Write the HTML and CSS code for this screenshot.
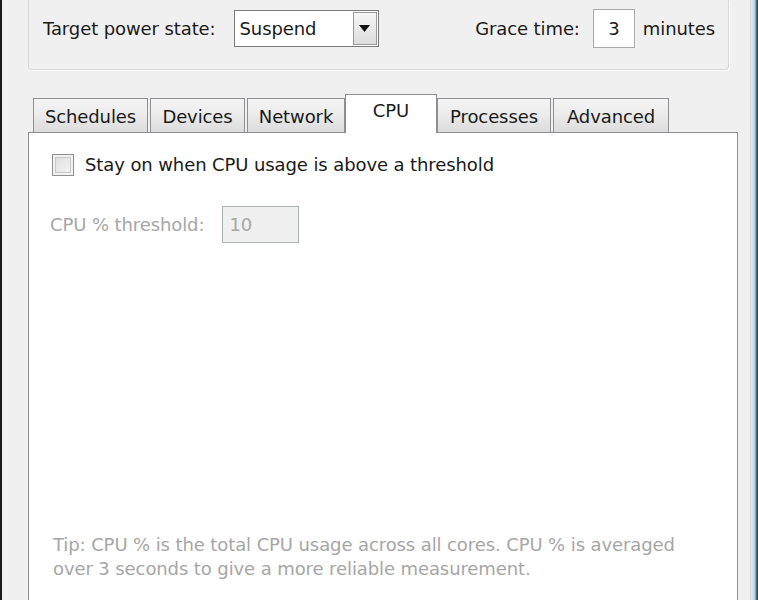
FILE: index.html
```html
<!DOCTYPE html>
<html>
<head>
<meta charset="utf-8">
<link rel="stylesheet" href="styles.css">
</head>
<body>
<div class="window">
  <div class="frame-left"></div>
  <div class="client">
    <div class="group">
      <div class="group-row">
        <span class="label">Target power state:</span>
        <div class="select">
          <span class="select-text">Suspend</span>
          <span class="select-btn"><svg width="11" height="7" viewBox="0 0 11 7"><path d="M0 0 H11 L5.5 7 Z" fill="#111"/></svg></span>
        </div>
        <span class="spacer"></span>
        <span class="label">Grace time:</span>
        <div class="num-input">3</div>
        <span class="label">minutes</span>
      </div>
    </div>
    <div class="tabs-area">
      <div class="tab-strip">
        <div class="tab w-sched">Schedules</div>
        <div class="tab w-dev">Devices</div>
        <div class="tab w-net">Network</div>
        <div class="tab active w-cpu">CPU</div>
        <div class="tab w-proc">Processes</div>
        <div class="tab w-adv">Advanced</div>
      </div>
      <div class="panel">
        <label class="check-row">
          <span class="checkbox"></span>
          <span class="check-label">Stay on when CPU usage is above a threshold</span>
        </label>
        <div class="threshold-row">
          <span class="disabled-label">CPU % threshold:</span>
          <div class="disabled-input">10</div>
        </div>
        <div class="fill"></div>
        <p class="tip">Tip: CPU % is the total CPU usage across all cores. CPU % is averaged<br>over 3 seconds to give a more reliable measurement.</p>
      </div>
    </div>
  </div>
  <div class="frame-right"></div>
</div>
</body>
</html>
```
FILE: styles.css
```css
* { box-sizing: border-box; }
html, body {
  margin: 0;
  padding: 0;
  width: 758px;
  height: 600px;
  overflow: hidden;
  background: #f0f0f0;
}
body {
  font-family: "DejaVu Sans", Verdana, sans-serif;
  font-size: 18px;
  letter-spacing: -0.1px;
  color: #1a1a1a;
}
.window {
  display: flex;
  height: 600px;
}
.frame-left {
  width: 2px;
  background: #1b1b1b;
  flex: none;
}
.client {
  flex: 1;
  display: flex;
  flex-direction: column;
  padding-left: 26px;
  padding-right: 12px;
  border-right: 1px solid #d8d8d8;
}
.frame-right {
  width: 7px;
  flex: none;
  background: linear-gradient(to right, #e6eef5 0, #cfe0ee 2px, #b7d0e6 4px, #5c7d92 5px, #1d3a48 7px);
}
.group {
  width: 701px;
  height: 70px;
  border: 1px solid #d5d9dc;
  border-top: none;
  border-radius: 0 0 4px 4px;
  box-shadow: 1px 1px 0 #fbfbfb;
  padding: 10px 13px 0 14px;
}
.group-row {
  display: flex;
  align-items: center;
  height: 37px;
}
.label { white-space: nowrap; }
.select {
  margin-left: 18px;
  width: 145px;
  height: 37px;
  background: #fff;
  border: 1px solid #7a7a7a;
  display: flex;
  align-items: center;
  justify-content: space-between;
  padding: 1px 1px 1px 5px;
}
.select-btn {
  width: 24px;
  height: 100%;
  border: 1px solid #9a9a9a;
  background: linear-gradient(#f6f6f6, #dcdcdc);
  display: flex;
  align-items: center;
  justify-content: center;
}
.spacer { flex: 1; }
.num-input {
  margin: 0 8px 0 13px;
  width: 42px;
  height: 39px;
  background: #fff;
  border: 1px solid #a9a9a9;
  display: flex;
  align-items: center;
  justify-content: center;
}
.tabs-area {
  margin-top: 24px;
  display: flex;
  flex-direction: column;
  flex: 1;
}
.tab-strip {
  display: flex;
  align-items: flex-end;
  height: 38px;
  padding-left: 5px;
  position: relative;
  z-index: 1;
}
.tab {
  height: 34px;
  margin-right: 2px;
  border: 1px solid #8d8f93;
  border-bottom: none;
  background: linear-gradient(#f4f4f4 0, #ececec 45%, #dcdcdc 100%);
  display: flex;
  align-items: center;
  justify-content: center;
  padding-top: 1px;
  white-space: nowrap;
}
.tab.active {
  height: 39px;
  margin-bottom: -1px;
  background: #fff;
  margin-right: 0;
  margin-left: -2px;
  align-items: flex-start;
  padding-top: 5px;
}
.w-sched { width: 115px; }
.w-dev { width: 95px; }
.w-net { width: 98px; }
.w-cpu { width: 92px; }
.w-proc { width: 114px; }
.w-adv { width: 116px; }
.panel {
  flex: 1;
  width: 710px;
  background: #fff;
  border: 1px solid #8d8f93;
  border-bottom: none;
  display: flex;
  flex-direction: column;
  padding: 20px 0 0 23px;
}
.check-row {
  display: flex;
  align-items: center;
  height: 23px;
}
.checkbox {
  width: 22px;
  height: 22px;
  border: 1px solid #8e8f8f;
  background: linear-gradient(135deg, #dcdcdc, #f6f6f6);
  box-shadow: inset 0 0 0 2px #f2f2f2, inset 0 0 0 3px #c8c8c8;
  margin-right: 11px;
}
.threshold-row {
  display: flex;
  align-items: center;
  margin-top: 30px;
  margin-left: -2px;
}
.disabled-label { color: #a6a6a6; }
.disabled-input {
  margin-left: 18px;
  width: 77px;
  height: 37px;
  border: 1px solid #adb2b5;
  background: #f0f0f0;
  color: #a6a6a6;
  display: flex;
  align-items: center;
  padding-left: 6px;
}
.fill { flex: 1; }
.tip {
  margin: 0 0 19px 1px;
  color: #a6a6a6;
  line-height: 24px;
}
```
